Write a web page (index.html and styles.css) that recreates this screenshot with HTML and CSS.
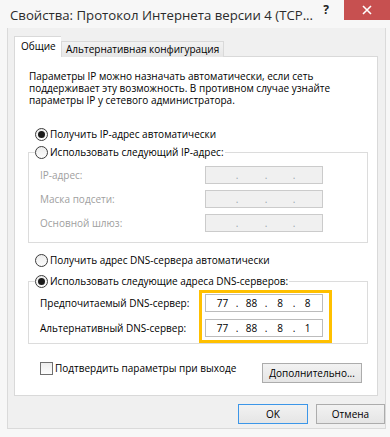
FILE: index.html
```html
<!DOCTYPE html>
<html lang="ru">

<head>
    <meta charset="UTF-8">
    <title>Свойства: Протокол Интернета версии 4 (TCP/IPv4)</title>
    <link rel="stylesheet" href="styles.css">
</head>

<body>
    <div class="window">
        <div class="titlebar">
            <span class="title">Свойства: Протокол Интернета версии 4 (TCP...</span>
            <span class="help">?</span>
            <span class="close">
                <svg width="10" height="10" viewBox="0 0 10 10">
                    <path d="M1 1 L9 9 M9 1 L1 9" stroke="#fff" stroke-width="1.6" fill="none" />
                </svg>
            </span>
        </div>

        <div class="client">
            <div class="tabs">
                <div class="tab active">Общие</div>
                <div class="tab">Альтернативная конфигурация</div>
            </div>

            <div class="panel">
                <p class="intro">
                    Параметры IP можно назначать автоматически, если сеть<br>
                    поддерживает эту возможность. В противном случае узнайте<br>
                    параметры IP у сетевого администратора.
                </p>

                <div class="option first">
                    <span class="rb checked"></span>Получить IP-адрес автоматически
                </div>

                <fieldset class="group ip-group">
                    <legend class="option"><span class="rb"></span>Использовать следующий IP-адрес:</legend>
                    <div class="fields">
                        <div class="row disabled">
                            <span class="label">IP-адрес:</span>
                            <span class="ipbox"><i></i><b>.</b><i></i><b>.</b><i></i><b>.</b><i></i></span>
                        </div>
                        <div class="row disabled">
                            <span class="label">Маска подсети:</span>
                            <span class="ipbox"><i></i><b>.</b><i></i><b>.</b><i></i><b>.</b><i></i></span>
                        </div>
                        <div class="row disabled">
                            <span class="label">Основной шлюз:</span>
                            <span class="ipbox"><i></i><b>.</b><i></i><b>.</b><i></i><b>.</b><i></i></span>
                        </div>
                    </div>
                </fieldset>

                <div class="option dns-auto">
                    <span class="rb"></span>Получить адрес DNS-сервера автоматически
                </div>

                <fieldset class="group dns-group">
                    <legend class="option"><span class="rb checked"></span>Использовать следующие адреса DNS-серверов:</legend>
                    <div class="fields">
                        <div class="row">
                            <span class="label">Предпочитаемый DNS-сервер:</span>
                            <span class="ipbox"><i>77</i><b>.</b><i>88</i><b>.</b><i>8</i><b>.</b><i>8</i></span>
                        </div>
                        <div class="row">
                            <span class="label">Альтернативный DNS-сервер:</span>
                            <span class="ipbox"><i>77</i><b>.</b><i>88</i><b>.</b><i>8</i><b>.</b><i>1</i></span>
                        </div>
                        <div class="highlight"></div>
                    </div>
                </fieldset>

                <div class="bottom-row">
                    <label class="check"><span class="cb"></span>Подтвердить параметры при выходе</label>
                    <button class="btn advanced">Дополнительно...</button>
                </div>
            </div>

            <div class="actions">
                <button class="btn default">OK</button>
                <button class="btn">Отмена</button>
            </div>
        </div>
    </div>
</body>

</html>
```

FILE: styles.css
```css
:root {
    --frame: #f7f7f7;
    --face: #f0f0f0;
    --line: #d9d9d9;
    --text: #000000;
    --muted: #a0a0a0;
    --mark: #ffc000;
}

* {
    box-sizing: border-box;
}

body {
    margin: 0;
    width: 390px;
    height: 437px;
    overflow: hidden;
    background-color: var(--frame);
    font-family: 'Open Sans', 'Noto Sans', sans-serif;
    font-size: 10px;
    color: var(--text);
}

/* title bar */

.titlebar {
    display: flex;
    align-items: flex-start;
    height: 28px;
}

.title {
    flex: 1;
    padding: 5px 0 0 10px;
    font-size: 13.2px;
    line-height: 20px;
    color: #2b2b2b;
    white-space: nowrap;
}

.help {
    width: 16px;
    margin: 3px 10px 0 0;
    font-size: 12px;
    font-weight: 700;
    line-height: 14px;
    text-align: center;
    color: #222;
}

.close {
    display: flex;
    align-items: center;
    justify-content: center;
    width: 46px;
    height: 20px;
    background-color: #c75050;
}

/* dialog body */

.client {
    width: 379px;
    height: 401px;
    margin-left: 7px;
    padding: 8px 0 0 6px;
    background-color: var(--face);
    border: 1px solid #dadada;
    border-top: none;
}

.tabs {
    display: flex;
    align-items: flex-end;
    position: relative;
    z-index: 1;
}

.tab {
    height: 16px;
    padding: 0 4px;
    line-height: 14px;
    background: linear-gradient(#f2f2f2, #e6e6e6);
    border: 1px solid var(--line);
    border-bottom: none;
    white-space: nowrap;
}

.tab.active {
    width: 47px;
    height: 21px;
    padding: 0 6px;
    line-height: 18px;
    background: #fff;
    border-right: none;
}

.panel {
    width: 364px;
    height: 340px;
    margin-top: -1px;
    padding: 0 0 0 13px;
    background-color: #fff;
    border: 1px solid var(--line);
}

.intro {
    margin: 13px 0 0 1px;
    line-height: 12px;
}

.option {
    display: flex;
    align-items: center;
    height: 18px;
    padding-left: 7px;
    white-space: nowrap;
}

.option.first {
    margin-top: 19px;
}

.option.dns-auto {
    margin-top: 8px;
}

.rb {
    position: relative;
    width: 13px;
    height: 13px;
    margin-right: 2px;
    border: 1px solid #3c3c3c;
    border-radius: 50%;
    background: linear-gradient(#ececec, #fdfdfd);
}

.rb.checked::after {
    content: "";
    position: absolute;
    left: 2px;
    top: 2px;
    width: 7px;
    height: 7px;
    border-radius: 50%;
    background-color: #1b1b1b;
}

/* group boxes */

.group {
    width: 340px;
    margin: 0;
    padding: 0 0 10px 0;
    border: 1px solid #dcdcdc;
}

.group legend {
    margin-left: 6px;
    padding: 0 1px 0 0;
}

.fields {
    position: relative;
    display: flex;
    flex-direction: column;
    gap: 6px;
    padding: 5px 0 0 11px;
}

.dns-group {
    margin-top: 3px;
    padding-bottom: 6px;
}

.dns-group .fields {
    gap: 7px;
    padding-top: 4px;
}

.row {
    display: flex;
    align-items: center;
    height: 18px;
}

.label {
    width: 165px;
    white-space: nowrap;
}

.row.disabled .label {
    color: var(--muted);
}

.ipbox {
    display: grid;
    grid-template-columns: 25px 4px 25px 4px 24px 4px 23px;
    align-items: center;
    width: 118px;
    height: 18px;
    padding-left: 4px;
    background-color: #fff;
    border: 1px solid #bcbcbc;
    line-height: 16px;
}

.ipbox i {
    font-style: normal;
    text-align: center;
}

.ipbox b {
    font-weight: 400;
    text-align: center;
}

.row.disabled .ipbox {
    background-color: var(--face);
    border-color: #cbcbcb;
    color: #9aa6b0;
}

.highlight {
    position: absolute;
    left: 170px;
    top: 0;
    width: 133px;
    height: 53px;
    border: 3px solid var(--mark);
}

/* bottom */

.bottom-row {
    display: flex;
    align-items: flex-start;
    margin-top: 18px;
}

.check {
    display: flex;
    align-items: center;
    height: 12px;
    width: 234px;
    padding-left: 12px;
    white-space: nowrap;
}

.cb {
    width: 13px;
    height: 13px;
    margin-right: 2px;
    border: 1px solid #707070;
    background: linear-gradient(#ededed, #fdfdfd);
}

.btn {
    height: 20px;
    padding: 0;
    font-family: inherit;
    font-size: 10px;
    color: var(--text);
    background: linear-gradient(#f2f2f2, #e5e5e5);
    border: 1px solid #acacac;
    border-radius: 0;
}

.advanced {
    width: 100px;
    margin-top: 1px;
}

.actions {
    display: flex;
    justify-content: flex-end;
    gap: 8px;
    width: 371px;
    margin-top: 8px;
}

.actions .btn {
    width: 69px;
}

.btn.default {
    width: 70px;
    border-color: #3c96e8;
}
```
